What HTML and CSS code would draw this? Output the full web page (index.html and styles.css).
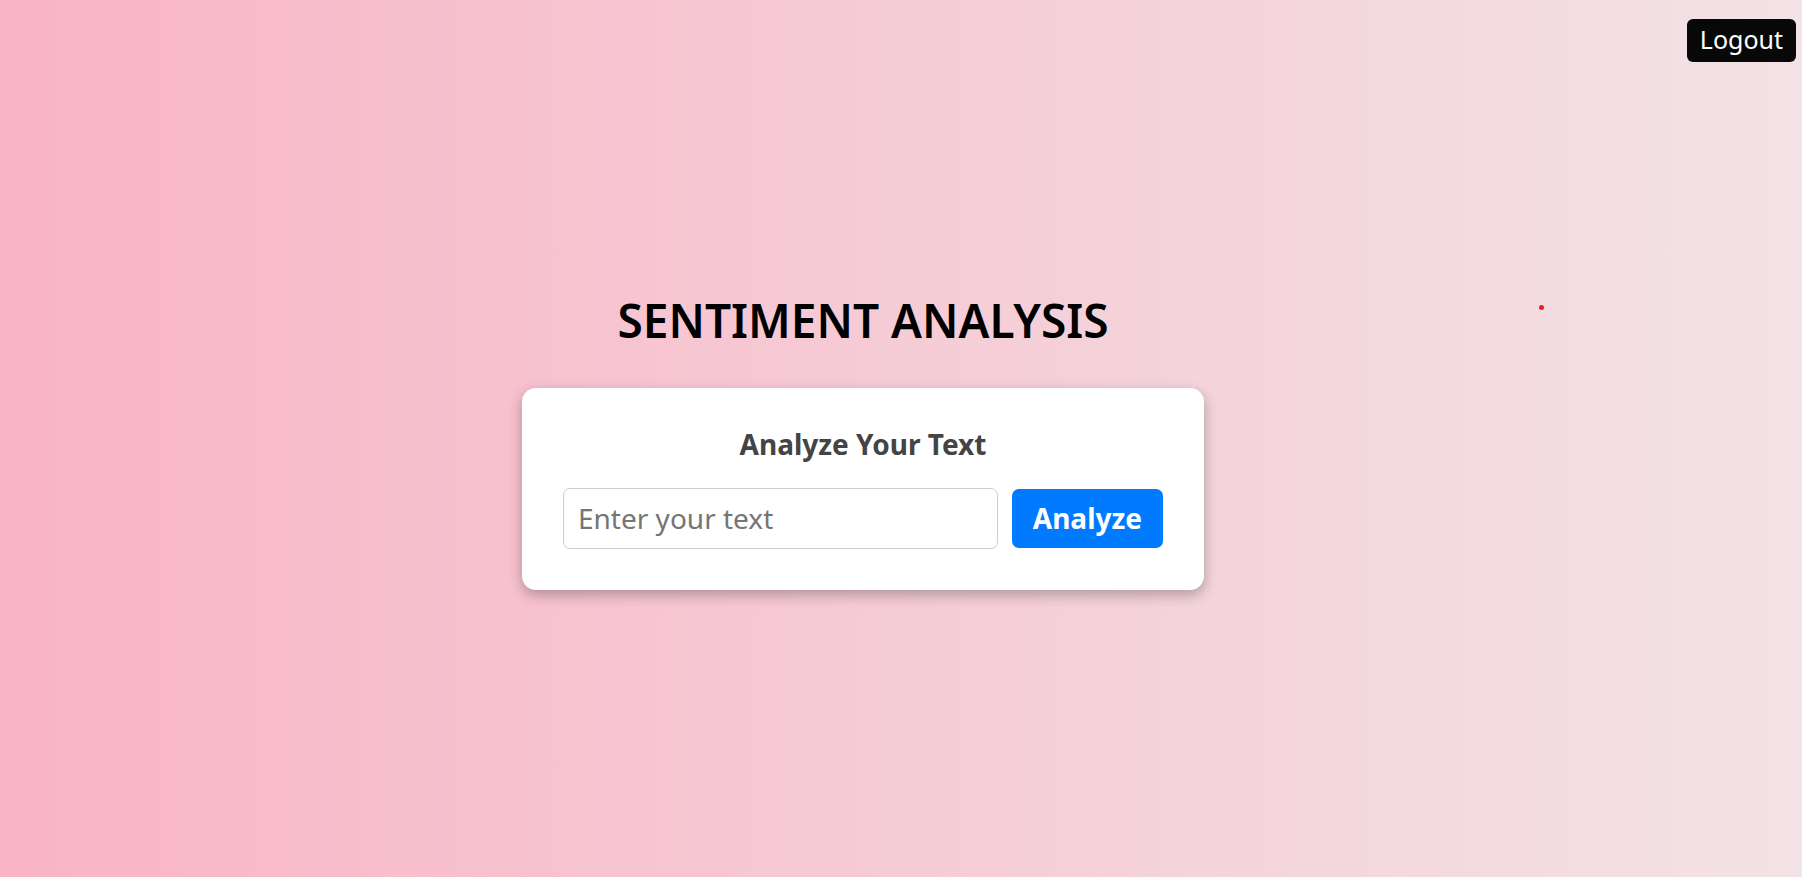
FILE: index.html
```html
<!DOCTYPE html>
<html lang="en">
<head>
<meta charset="utf-8">
<meta name="viewport" content="width=device-width, initial-scale=1">
<title>Sentiment Analysis</title>
<link rel="stylesheet" href="styles.css">
</head>
<body>
<div class="page">
  <button class="logout" type="button">Logout</button>
  <main class="content">
    <h1 class="title">SENTIMENT ANALYSIS</h1>
    <form class="card">
      <label class="card-title" for="text">Analyze Your Text</label>
      <div class="row">
        <input class="field" id="text" type="text" placeholder="Enter your text">
        <button class="analyze" type="button">Analyze</button>
      </div>
    </form>
  </main>
  <span class="dot"></span>
</div>
</body>
</html>
```

FILE: styles.css
```css
* {
  box-sizing: border-box;
}

body {
  margin: 0;
  font-family: "Lucida Sans", "Noto Sans", "Open Sans", sans-serif;
}

button,
input {
  font-family: inherit;
}

.page {
  position: relative;
  display: grid;
  min-height: 100vh;
  background: linear-gradient(to right, #f9b4c5, #f6c8d3 42%, #f2e3e6);
}

.logout {
  grid-area: 1 / 1;
  place-self: start end;
  margin: 19px 6px 0 0;
  padding: 3px 13px 5px;
  border: 0;
  border-radius: 6px;
  background: #080808;
  color: #fff;
  font-size: 25px;
  line-height: 35px;
}

.content {
  grid-area: 1 / 1;
  place-self: center;
  width: 100%;
  padding-right: 76px;
}

.title {
  margin: 0 0 36px;
  color: #000;
  font-size: 46px;
  font-weight: 600;
  line-height: 64px;
  text-align: center;
}

.card {
  width: 100%;
  max-width: 682px;
  margin: 0 auto;
  padding: 40px 41px 41px;
  border-radius: 14px;
  background: #fff;
  box-shadow: 0 5px 14px rgba(0, 0, 0, 0.28);
}

.card-title {
  display: block;
  margin-bottom: 28px;
  color: #444;
  font-size: 28px;
  font-weight: 700;
  line-height: 32px;
  text-align: center;
}

.row {
  display: flex;
  align-items: center;
  gap: 14px;
}

.field {
  flex: 1;
  min-width: 0;
  height: 61px;
  padding: 0 14px;
  border: 1px solid #ccc;
  border-radius: 7px;
  background: #fff;
  font-size: 28px;
}

.field::placeholder {
  color: #757575;
}

.analyze {
  padding: 12px 21px;
  border: 0;
  border-radius: 7px;
  background: #007bff;
  color: #fff;
  font-size: 28px;
  font-weight: 700;
  line-height: 35px;
}

.dot {
  position: absolute;
  top: 35%;
  left: 85.4%;
  width: 5px;
  height: 5px;
  margin-top: -2px;
  border-radius: 50%;
  background: #ed1c24;
}
```
